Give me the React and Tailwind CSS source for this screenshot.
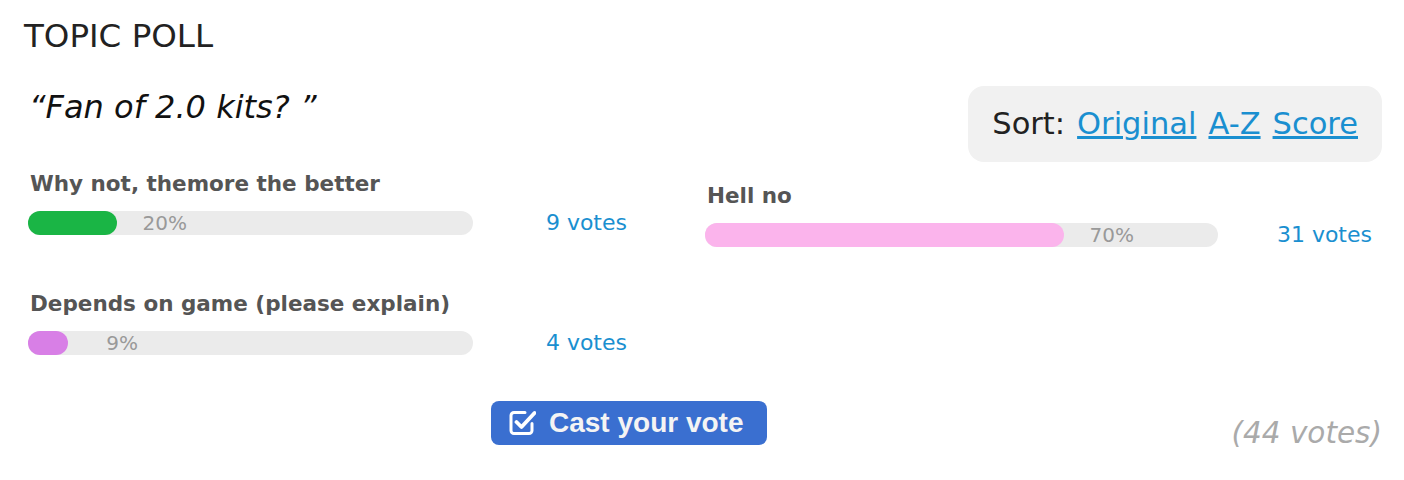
const FONT = { fontFamily: '"DejaVu Sans", Verdana, sans-serif' }

const LEFT = [
  { label: 'Why not, themore the better', pct: 20, votes: 9, color: 'bg-[#1ab545]' },
  { label: 'Depends on game (please explain)', pct: 9, votes: 4, color: 'bg-[#d87fe6]' },
]
const RIGHT = [{ label: 'Hell no', pct: 70, votes: 31, color: 'bg-[#fbb4ec]' }]

function Option({ opt, barWidth }) {
  return (
    <div className="flex flex-col">
      <div className="pl-[2px] text-[21.5px] leading-[26px] font-bold text-[#555]">{opt.label}</div>
      <div className="mt-[14px] flex items-center">
        <div className="flex h-[24px] items-center rounded-full bg-[#ebebeb]" style={{ width: barWidth }}>
          <div className={`h-full rounded-full ${opt.color}`} style={{ width: Math.round((barWidth * opt.pct) / 100) }} />
          <span className="w-[70px] shrink-0 text-right text-[20px] leading-[24px] text-[#999]">{opt.pct}%</span>
        </div>
        <div className="flex-1 text-right text-[22px] leading-[24px] text-[#1a8fd0]">{opt.votes} votes</div>
      </div>
    </div>
  )
}

function CheckIcon() {
  return (
    <svg width="28" height="28" viewBox="0 0 28 28" fill="none" stroke="white" strokeLinecap="round" strokeLinejoin="round">
      <path d="M17 3.5H6a3 3 0 0 0-3 3v15a3 3 0 0 0 3 3h15a3 3 0 0 0 3-3v-7" strokeWidth="3" />
      <path d="M8.5 13l5 5L26.5 4" strokeWidth="3.8" />
    </svg>
  )
}

export default function App() {
  return (
    <div className="min-h-[480px] bg-white pl-6 pr-[22px] pt-[17px]" style={FONT}>
      <h2 className="text-[32.5px] leading-[38px] text-[#222]">TOPIC POLL</h2>

      <div className="mt-[31px] flex items-start justify-between">
        <p className="ml-[5px] mt-[2px] text-[32px] italic leading-[38px] text-[#111]">“Fan of 2.0 kits? ”</p>
        <div className="flex items-center gap-[12px] rounded-[16px] bg-[#f1f1f1] px-6 py-5 text-[30.5px] leading-[36px] text-[#222]">
          <span>Sort:</span>
          <a href="#" className="text-[#1a8fd0] underline">Original</a>
          <a href="#" className="text-[#1a8fd0] underline">A-Z</a>
          <a href="#" className="text-[#1a8fd0] underline">Score</a>
        </div>
      </div>

      <div className="mt-[9px] flex pl-1">
        <div className="flex w-[599px] flex-col gap-[56px]">
          {LEFT.map((o) => (
            <Option key={o.label} opt={o} barWidth={445} />
          ))}
        </div>
        <div className="ml-[78px] mt-[12px] flex w-[667px] flex-col">
          {RIGHT.map((o) => (
            <Option key={o.label} opt={o} barWidth={513} />
          ))}
        </div>
      </div>

      <div className="mt-[46px] flex items-start justify-between">
        <button
          className="ml-[467px] flex h-[44px] items-center gap-[13px] rounded-[8px] bg-[#3a6fd0] pl-[17px] pr-[23px] text-[28px] font-bold text-[#f4f4f4]"
          style={{ fontFamily: '"Liberation Sans", Arial, sans-serif' }}
        >
          <CheckIcon />
          <span>Cast your vote</span>
        </button>
        <span className="mt-[14px] text-[29.5px] italic leading-[36px] text-[#aaa]">(44 votes)</span>
      </div>
    </div>
  )
}
